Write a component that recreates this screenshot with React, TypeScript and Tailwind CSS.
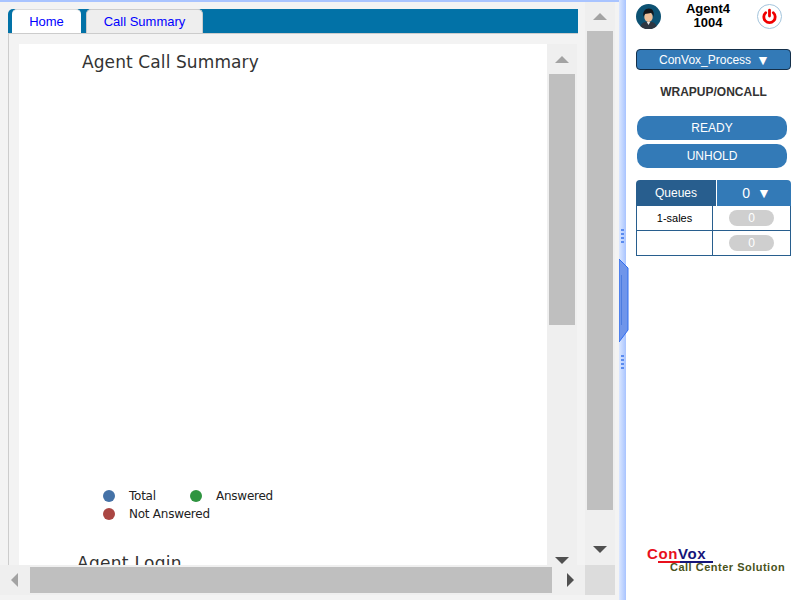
const sans = "font-['Liberation_Sans',Arial,sans-serif]";
const dejavu = "font-['DejaVu_Sans',sans-serif]";

function Arrow({ dir, dark }: { dir: "up" | "down" | "left" | "right"; dark?: boolean }) {
  const fill = dark ? "#505050" : "#a3a3a3";
  if (dir === "up")
    return (
      <svg width="14" height="7" viewBox="0 0 14 7" className="block">
        <path d="M7 0L14 7H0z" fill={fill} />
      </svg>
    );
  if (dir === "down")
    return (
      <svg width="14" height="7" viewBox="0 0 14 7" className="block">
        <path d="M0 0H14L7 7z" fill={fill} />
      </svg>
    );
  if (dir === "left")
    return (
      <svg width="7" height="14" viewBox="0 0 7 14" className="block">
        <path d="M7 0V14L0 7z" fill={fill} />
      </svg>
    );
  return (
    <svg width="7" height="14" viewBox="0 0 7 14" className="block">
      <path d="M0 0L7 7L0 14z" fill={fill} />
    </svg>
  );
}

function LegendDot({ color, label, width }: { color: string; label: string; width: string }) {
  return (
    <div className={`flex items-center ${width}`}>
      <span className={`w-[12px] h-[12px] rounded-full ${color}`} />
      <span className="ml-[14px] text-[12px] leading-[18px] tracking-[-0.25px] text-[#222]">{label}</span>
    </div>
  );
}

function Avatar() {
  return (
    <svg width="25" height="25" viewBox="0 0 25 25" className="block">
      <circle cx="12.500" cy="12.500" r="12.500" fill="#0d5273" />
      <path d="M4.500 22.500c.7-3.500 3.500-4.700 8-4.700s7.300 1.200 8 4.700a12.500 12.500 0 0 1-16 0z" fill="#2e3742" />
      <path d="M10.700 17.800l1.800 3.200 1.800-3.200z" fill="#e8e8e8" />
      <ellipse cx="12.500" cy="13" rx="4.200" ry="5" fill="#eebf98" />
      <path d="M7.500 13c-1-5.500 1.500-8.500 5.300-8.500s5.700 3 4.700 8.500c-.3-2-1-3.500-2.300-4.300-2 .9-4.500 1-5.700 1-.9.700-1.700 1.800-2 3.300z" fill="#14171b" />
    </svg>
  );
}

function PowerButton() {
  return (
    <svg width="25" height="25" viewBox="0 0 25 25" className="block">
      <circle cx="12.500" cy="12.500" r="12" fill="#fff" stroke="#a3c4dc" />
      <path d="M8.700 8.700a5.700 5.700 0 1 0 7.600 0" fill="none" stroke="#f00000" strokeWidth="2.800" strokeLinecap="round" />
      <path d="M12.500 6.200v5.800" fill="none" stroke="#f00000" strokeWidth="2.800" strokeLinecap="round" />
    </svg>
  );
}

function Grip() {
  return (
    <div className="flex flex-col gap-[2px] items-center">
      {[0, 1, 2, 3].map((i) => (
        <span key={i} className="w-[3px] h-[2px] bg-[#5b8cf0]" />
      ))}
    </div>
  );
}

export default function App() {
  return (
    <div className={`relative flex w-[800px] h-[600px] overflow-hidden bg-white ${sans}`}>
      {/* left pane */}
      <div className="flex flex-col w-[619px] h-full bg-[#f3f3f3] border-t-[2px] border-[#a9c4ff]">
        <div className="flex h-[563px]">
          <div className="w-[585px] pl-[8px] pr-[7px] pt-[7px]">
            <div className="flex h-[24px] bg-[#0272a7] rounded-tl-[5px]">
              <div className="ml-[4px] w-[69px] h-[24px] bg-white border-t border-[#dddddd] rounded-t-[5px] text-center text-[13px] leading-[23px] text-[#0000ff]">
                Home
              </div>
              <div className="ml-[5px] w-[117px] h-[24px] bg-[#eeeeee] border border-b-0 border-[#cccccc] rounded-t-[5px] text-center text-[13px] leading-[23px] text-[#0000ff]">
                Call Summary
              </div>
            </div>
            <div className="flex h-[532px] border-l border-t border-[#cccccc] pl-[10px] pt-[10px]">
              <div className={`w-[528px] h-[521px] overflow-hidden bg-white ${dejavu}`}>
                <h2 className="ml-[63px] mt-[6px] text-[17px] leading-[24px] tracking-[0.1px] text-[#333] font-normal">
                  Agent Call Summary
                </h2>
                <div className="ml-[84px] mt-[413px] flex flex-wrap w-[220px]">
                  <LegendDot color="bg-[#4572a7]" label="Total" width="w-[87px]" />
                  <LegendDot color="bg-[#2f9440]" label="Answered" width="w-[110px]" />
                  <LegendDot color="bg-[#aa4643]" label="Not Answered" width="w-[200px]" />
                </div>
                <h2 className="ml-[58px] mt-[28px] text-[17px] leading-[24px] tracking-[0.3px] text-[#333] font-normal">
                  Agent Login
                </h2>
              </div>
              <div className="flex flex-col items-center w-[30px] h-[521px] bg-[#efefef] pt-[12px]">
                <Arrow dir="up" />
                <div className="mt-[11px] w-[26px] h-[251px] bg-[#bfbfbf]" />
                <div className="mt-auto mb-[1px]">
                  <Arrow dir="down" dark />
                </div>
              </div>
            </div>
          </div>
          <div className="flex flex-col items-center w-[30px] h-full bg-[#efefef] pt-[11px] pb-[12px]">
            <Arrow dir="up" />
            <div className="mt-[11px] w-[26px] h-[479px] bg-[#bfbfbf]" />
            <div className="mt-auto">
              <Arrow dir="down" dark />
            </div>
          </div>
        </div>
        <div className="flex h-[30px]">
          <div className="flex items-center w-[585px] h-full bg-[#efefef] pl-[11px]">
            <Arrow dir="left" />
            <div className="ml-[12px] w-[522px] h-[26px] bg-[#bfbfbf]" />
            <div className="ml-[15px]">
              <Arrow dir="right" dark />
            </div>
          </div>
          <div className="w-[30px] h-full bg-[#dcdcdc]" />
        </div>
      </div>

      {/* splitter */}
      <div className="flex flex-col items-center w-[7px] h-full pt-[229px] bg-gradient-to-r from-[#dbe7ff] to-[#a9c4ff]">
        <Grip />
        <div className="mt-[112px]">
          <Grip />
        </div>
      </div>
      <svg width="10" height="84" viewBox="0 0 10 84" className="absolute left-[619px] top-[259px]">
        <path d="M0 0L9 9V71L0 83z" fill="#6f95ea" stroke="#2f6cf0" />
        <path d="M2.500 16V66" stroke="#4c7de0" fill="none" />
      </svg>

      {/* right pane */}
      <div className="flex flex-col w-[174px] h-full pl-[10px] pt-[4px] bg-white">
        <div className="flex items-start h-[25px]">
          <Avatar />
          <div className="w-[94px] text-center text-[13px] leading-[14px] font-bold text-black -mt-[2px]">
            Agent4
            <br />
            1004
          </div>
          <div className="ml-[2px]">
            <PowerButton />
          </div>
        </div>
        <div className="mt-[20px] flex items-center justify-center w-[155px] h-[21px] rounded-[4px] bg-[#337ab7] border border-[#15304a] text-[12px] text-white">
          <span className="ml-[2px]">ConVox_Process</span>
          <span className="ml-[5px] text-[14px] leading-[14px]">▼</span>
        </div>
        <div className="mt-[14px] w-[155px] text-center text-[12px] leading-[16px] font-bold text-[#333]">
          WRAPUP/ONCALL
        </div>
        <div className="mt-[16px] ml-[1px] w-[150px] h-[24px] rounded-[10px] bg-[#337ab7] text-center text-[12px] leading-[24px] text-white">
          READY
        </div>
        <div className="mt-[4px] ml-[1px] w-[150px] h-[24px] rounded-[10px] bg-[#337ab7] text-center text-[12px] leading-[24px] text-white">
          UNHOLD
        </div>
        <div className="mt-[12px] w-[155px]">
          <div className="flex h-[26px]">
            <div className="w-[80px] rounded-tl-[4px] bg-[#285e8e] text-center text-[12px] leading-[27px] text-white">
              Queues
            </div>
            <div className="w-[74px] ml-[1px] rounded-tr-[4px] bg-[#337ab7] pl-[4px] text-center text-[14px] leading-[27px] text-white">
              <span className="ml-[1px]">0</span> <span className="ml-[3px] text-[14px]">▼</span>
            </div>
          </div>
          <div className="grid grid-cols-[76px_1fr] border border-t-0 border-[#285e8e]">
            <div className="h-[25px] border-r border-b border-[#285e8e] text-center text-[11px] leading-[24px] text-black">1-sales</div>
            <div className="h-[25px] border-b border-[#285e8e] flex items-center justify-center">
              <span className="w-[45px] h-[16px] rounded-full bg-[#cfcfcf] text-center text-[12px] leading-[17px] text-white">0</span>
            </div>
            <div className="h-[24px] border-r border-[#285e8e]" />
            <div className="h-[24px] flex items-center justify-center">
              <span className="w-[45px] h-[16px] rounded-full bg-[#cfcfcf] text-center text-[12px] leading-[17px] text-white">0</span>
            </div>
          </div>
        </div>
        <div className="mt-auto mb-[25px] ml-[11px] h-[30px] w-[140px]">
          <div className="text-[15px] leading-[17px] font-bold tracking-[0.6px]">
            <span className="text-[#e8101c]">Con</span>
            <span className="text-[#15157a]">Vox</span>
          </div>
          <div className="flex h-[2px] w-[55px] ml-[11px] -mt-[1px]">
            <span className="w-[22px] bg-[#e8101c]" />
            <span className="flex-1 bg-[#15157a]" />
          </div>
          <div className="ml-[23px] -mt-[2px] text-[11px] leading-[12px] font-bold tracking-[0.5px] whitespace-nowrap text-[#4a5320]">
            Call Center Solution
          </div>
        </div>
      </div>
    </div>
  );
}
